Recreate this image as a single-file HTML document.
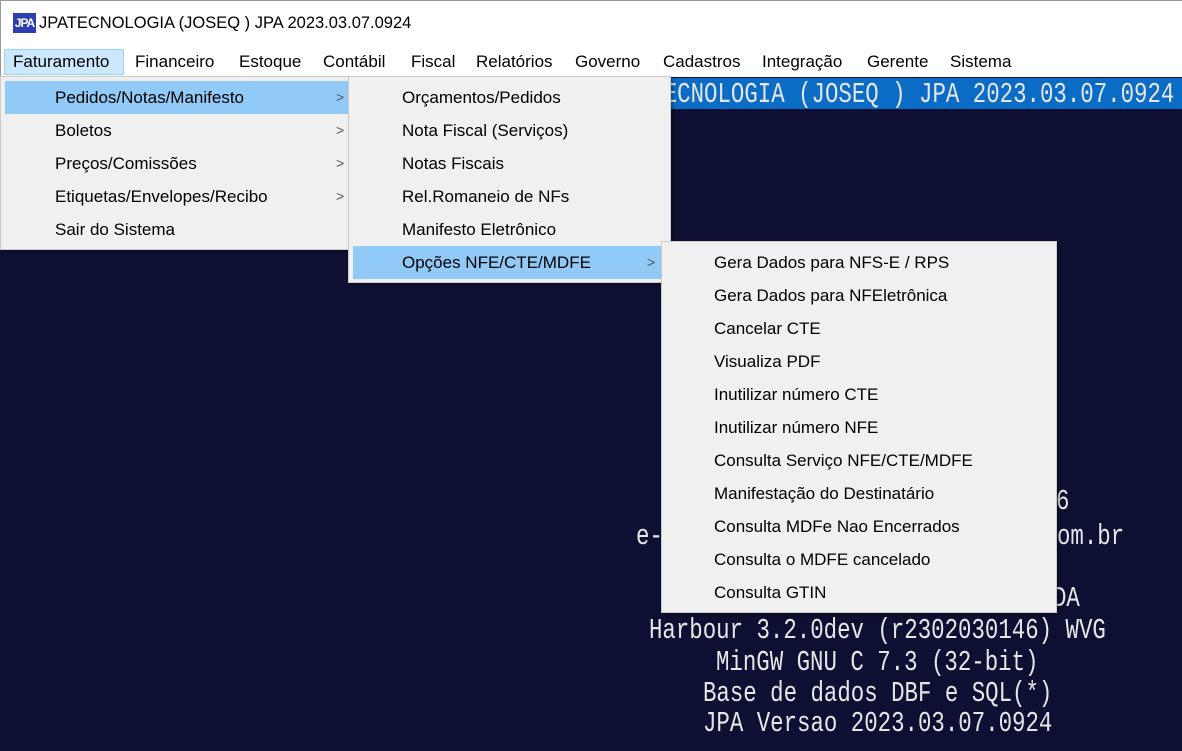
<!DOCTYPE html>
<html><head><meta charset="utf-8"><style>
*{margin:0;padding:0;box-sizing:border-box}
body{width:1182px;height:751px;overflow:hidden;position:relative;background:#0e1033;font-family:"Liberation Sans",sans-serif;font-size:17px;color:#000}
.title{position:absolute;left:0;top:0;width:1182px;height:45px;background:#fff;border-top:1px solid #999;border-left:1px solid #999}
.title span{position:absolute;left:38px;top:13px;font-size:16.5px}
.logo{position:absolute;left:12px;top:12px;width:23px;height:20px;background:#2d3fb0;color:#fff;font:bold 12px "Liberation Sans",sans-serif;line-height:20px;text-align:center;letter-spacing:-1px}
.mbar{position:absolute;left:0;top:45px;width:1182px;height:32px;background:#fff;border-left:1px solid #999}
.mbar span{position:absolute;top:7px}
.fat{position:absolute;left:3px;top:4px;width:120px;height:26px;background:#cce8ff;border:1px solid #99d1ff}
.con{position:absolute;font-family:"Liberation Mono",monospace;font-size:22.4px;color:#e6e6e6;white-space:pre;transform:scaleY(1.3);transform-origin:0 50%;line-height:30px}
.bar{position:absolute;left:0;top:78px;width:1182px;height:31px;background:#0a6cc4}
.menu{position:absolute;background:#f0f0f0;border:1px solid #ccc;box-shadow:2px 2px 3px rgba(0,0,0,.35)}
.it{position:absolute;left:0;right:0;height:33px;line-height:33px;white-space:nowrap}
.hl{background:#91c9f7}
.ar{position:absolute;color:#555;font-size:14px}
</style></head><body>
<div class="title"><div class="logo">JPA</div><span>JPATECNOLOGIA (JOSEQ ) JPA 2023.03.07.0924</span></div>
<div class="mbar"><div class="fat"></div>
<span style="left:12px">Faturamento</span><span style="left:134px">Financeiro</span><span style="left:238px">Estoque</span><span style="left:322px">Contábil</span><span style="left:410px">Fiscal</span><span style="left:475px">Relatórios</span><span style="left:574px">Governo</span><span style="left:662px">Cadastros</span><span style="left:761px">Integração</span><span style="left:866px">Gerente</span><span style="left:949px">Sistema</span></div>
<div class="bar"></div>
<div class="con" style="left:610px;top:79px">JPATECNOLOGIA (JOSEQ ) JPA 2023.03.07.0924</div>
<div class="con" style="left:1056px;top:486px">6</div>
<div class="con" style="left:636px;top:521px">e-</div>
<div class="con" style="left:1057px;top:521px">om.br</div>
<div class="con" style="left:1053px;top:583px">DA</div>
<div class="con" style="left:649px;top:615px">Harbour 3.2.0dev (r2302030146) WVG</div>
<div class="con" style="left:716px;top:647px">MinGW GNU C 7.3 (32-bit)</div>
<div class="con" style="left:703px;top:678px">Base de dados DBF e SQL(*)</div>
<div class="con" style="left:703px;top:708px">JPA Versao 2023.03.07.0924</div>

<div class="menu" style="left:0;top:76px;width:350px;height:174px">
<div class="it hl" style="top:4px;left:4px;right:1px"><span style="position:absolute;left:50px">Pedidos/Notas/Manifesto</span><span class="ar" style="left:331px">&gt;</span></div>
<div class="it" style="top:37px"><span style="position:absolute;left:54px">Boletos</span><span class="ar" style="left:335px">&gt;</span></div>
<div class="it" style="top:70px"><span style="position:absolute;left:54px">Preços/Comissões</span><span class="ar" style="left:335px">&gt;</span></div>
<div class="it" style="top:103px"><span style="position:absolute;left:54px">Etiquetas/Envelopes/Recibo</span><span class="ar" style="left:335px">&gt;</span></div>
<div class="it" style="top:136px"><span style="position:absolute;left:54px">Sair do Sistema</span></div>
</div>

<div class="menu" style="left:348px;top:76px;width:323px;height:207px">
<div class="it" style="top:4px"><span style="position:absolute;left:53px">Orçamentos/Pedidos</span></div>
<div class="it" style="top:37px"><span style="position:absolute;left:53px">Nota Fiscal (Serviços)</span></div>
<div class="it" style="top:70px"><span style="position:absolute;left:53px">Notas Fiscais</span></div>
<div class="it" style="top:103px"><span style="position:absolute;left:53px">Rel.Romaneio de NFs</span></div>
<div class="it" style="top:136px"><span style="position:absolute;left:53px">Manifesto Eletrônico</span></div>
<div class="it hl" style="top:169px;left:4px;right:4px"><span style="position:absolute;left:49px">Opções NFE/CTE/MDFE</span><span class="ar" style="left:294px">&gt;</span></div>
</div>

<div class="menu" style="left:661px;top:241px;width:396px;height:372px">
<div class="it" style="top:4px"><span style="position:absolute;left:52px">Gera Dados para NFS-E / RPS</span></div>
<div class="it" style="top:37px"><span style="position:absolute;left:52px">Gera Dados para NFEletrônica</span></div>
<div class="it" style="top:70px"><span style="position:absolute;left:52px">Cancelar CTE</span></div>
<div class="it" style="top:103px"><span style="position:absolute;left:52px">Visualiza PDF</span></div>
<div class="it" style="top:136px"><span style="position:absolute;left:52px">Inutilizar número CTE</span></div>
<div class="it" style="top:169px"><span style="position:absolute;left:52px">Inutilizar número NFE</span></div>
<div class="it" style="top:202px"><span style="position:absolute;left:52px">Consulta Serviço NFE/CTE/MDFE</span></div>
<div class="it" style="top:235px"><span style="position:absolute;left:52px">Manifestação do Destinatário</span></div>
<div class="it" style="top:268px"><span style="position:absolute;left:52px">Consulta MDFe Nao Encerrados</span></div>
<div class="it" style="top:301px"><span style="position:absolute;left:52px">Consulta o MDFE cancelado</span></div>
<div class="it" style="top:334px"><span style="position:absolute;left:52px">Consulta GTIN</span></div>
</div>
</body></html>
